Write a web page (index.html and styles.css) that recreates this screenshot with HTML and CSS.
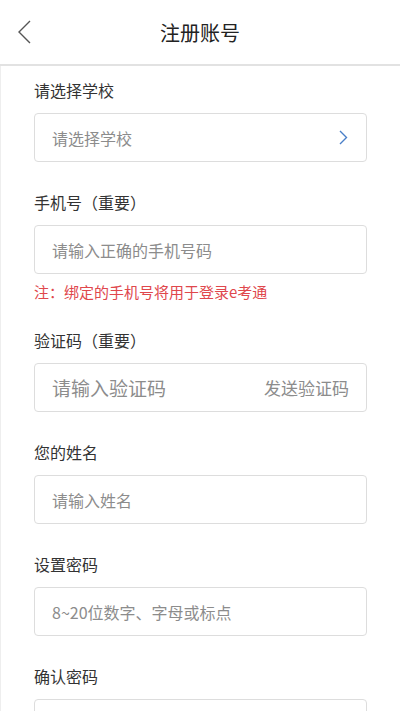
FILE: index.html
```html
<!DOCTYPE html>
<html lang="zh-CN">
<head>
  <meta charset="UTF-8" />
  <meta name="viewport" content="width=device-width, initial-scale=1.0" />
  <title>注册账号</title>
  <link rel="stylesheet" href="styles.css">
</head>
<body>
  <div class="header">
    <a class="back" href="#">
      <svg width="14" height="24" viewBox="0 0 14 24"><path d="M13 1 L2 12 L13 23" fill="none" stroke="#555" stroke-width="1.4"/></svg>
    </a>
    <h1>注册账号</h1>
  </div>

  <div class="form">
    <div class="field">
      <label>请选择学校</label>
      <div class="box">
        <span class="ph">请选择学校</span>
        <svg class="arrow" width="9" height="15" viewBox="0 0 9 15"><path d="M1 1 L7.5 7.5 L1 14" fill="none" stroke="#4a7fc8" stroke-width="1.4"/></svg>
      </div>
    </div>

    <div class="field">
      <label>手机号（重要）</label>
      <div class="box"><span class="ph">请输入正确的手机号码</span></div>
      <p class="note">注：绑定的手机号将用于登录e考通</p>
    </div>

    <div class="field">
      <label>验证码（重要）</label>
      <div class="box">
        <span class="ph big">请输入验证码</span>
        <span class="send">发送验证码</span>
      </div>
    </div>

    <div class="field">
      <label>您的姓名</label>
      <div class="box"><span class="ph">请输入姓名</span></div>
    </div>

    <div class="field">
      <label>设置密码</label>
      <div class="box"><span class="ph">8~20位数字、字母或标点</span></div>
    </div>

    <div class="field">
      <label>确认密码</label>
      <div class="box"></div>
    </div>
  </div>
</body>
</html>
```

FILE: styles.css
```css
body {
  margin: 0;
  background: #fff;
  font-family: "Noto Sans CJK SC", "Noto Sans", sans-serif;
  color: #333;
}
.header {
  height: 64px;
  border-bottom: 2px solid #e2e2e2;
  display: flex;
  align-items: center;
  justify-content: center;
  position: relative;
}
.header h1 {
  margin: 0;
  font-size: 20px;
  font-weight: normal;
  color: #222;
}
.back {
  position: absolute;
  left: 17px;
  top: 20px;
  line-height: 0;
}
.form {
  border-left: 1px solid #eee;
  padding: 14px 33px 0 33px;
}
.field {
  margin-bottom: 30px;
}
.field label {
  display: block;
  font-size: 16px;
  line-height: 20px;
  color: #333;
  margin-bottom: 13px;
}
.box {
  height: 47px;
  border: 1px solid #ddd;
  border-radius: 4px;
  display: flex;
  align-items: center;
  justify-content: space-between;
  padding: 0 17px;
}
.ph {
  font-size: 16px;
  color: #8c8c8c;
}
.ph.big {
  font-size: 19px;
}
.send {
  font-size: 17px;
  color: #8c8c8c;
}
.arrow {
  margin-right: 1px;
}
.note {
  margin: 8px 0 -2px 0;
  font-size: 15px;
  line-height: 20px;
  color: #e0474c;
}
```
